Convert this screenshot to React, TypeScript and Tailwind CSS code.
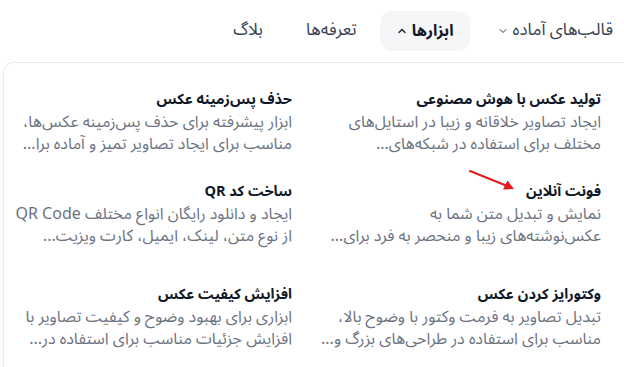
import { ChevronDown, ChevronUp } from 'lucide-react';

const tools = [
  {
    title: 'تولید عکس با هوش مصنوعی',
    lines: ['ایجاد تصاویر خلاقانه و زیبا در استایل‌های', 'مختلف برای استفاده در شبکه‌های...'],
  },
  {
    title: 'حذف پس‌زمینه عکس',
    lines: ['ابزار پیشرفته برای حذف پس‌زمینه عکس‌ها،', 'مناسب برای ایجاد تصاویر تمیز و آماده برا...'],
  },
  {
    title: 'فونت آنلاین',
    lines: ['نمایش و تبدیل متن شما به', 'عکس‌نوشته‌های زیبا و منحصر به فرد برای...'],
    arrow: true,
  },
  {
    title: 'ساخت کد QR',
    lines: ['ایجاد و دانلود رایگان انواع مختلف QR Code', 'از نوع متن، لینک، ایمیل، کارت ویزیت...'],
  },
  {
    title: 'وکتورایز کردن عکس',
    lines: ['تبدیل تصاویر به فرمت وکتور با وضوح بالا،', 'مناسب برای استفاده در طراحی‌های بزرگ و...'],
    last: true,
  },
  {
    title: 'افزایش کیفیت عکس',
    lines: ['ابزاری برای بهبود وضوح و کیفیت تصاویر با', 'افزایش جزئیات مناسب برای استفاده در...'],
    last: true,
  },
];

const ToolItem = ({ tool }: any) => {
  return (
    <div className={`flex flex-col ${tool.last ? 'mt-[11px]' : ''}`}>
      <h3 className="relative w-fit text-[14.5px] leading-[22px] font-bold text-[#111827]">
        {tool.arrow && (
          // red annotation arrow pointing at the title
          <svg
            className="absolute right-full top-[-12px] mr-[10px]"
            width="48"
            height="22"
            viewBox="0 0 48 22"
          >
            <line x1="2" y1="2" x2="38" y2="16.5" stroke="#e31b1b" strokeWidth="2" strokeLinecap="round" />
            <path d="M46 20 L35 20.5 L39.5 11.5 Z" fill="#e31b1b" />
          </svg>
        )}
        {tool.title}
      </h3>
      <p className="text-[16px] leading-[22px] text-[#6b7280]">
        {tool.lines[0]}
        <br />
        {tool.lines[1]}
      </p>
    </div>
  );
};

export default function App() {
  return (
    <div
      dir="rtl"
      className="w-[624px] h-[367px] overflow-hidden bg-white"
      style={{ fontFamily: '"Noto Sans Arabic", "DejaVu Sans", sans-serif' }}
    >
      <nav className="flex items-center h-[62px] pr-[11px] text-[17px] text-[#374151]">
        <div className="flex items-center gap-[4px]">
          <span>قالب‌های آماده</span>
          <ChevronDown size={12} strokeWidth={2} />
        </div>
        <div className="flex items-center gap-[4px] h-[40px] mr-[27px] pr-[16px] pl-[16px] rounded-xl bg-[#f5f6f8] text-[16px] font-bold text-[#111827]">
          <span>ابزارها</span>
          <ChevronUp size={12} strokeWidth={2.5} />
        </div>
        <span className="mr-[23px]">تعرفه‌ها</span>
        <span className="mr-[43px]">بلاگ</span>
      </nav>

      <div className="ml-[3px] h-[305px] border-t border-l border-[#e8eaed] rounded-tl-[10px] pt-[26px] pr-[23px]">
        <div className="grid grid-cols-[290px_290px] gap-x-[19px] gap-y-[26px]">
          {tools.map((tool, i) => (
            <ToolItem key={i} tool={tool} />
          ))}
        </div>
      </div>
    </div>
  );
}
